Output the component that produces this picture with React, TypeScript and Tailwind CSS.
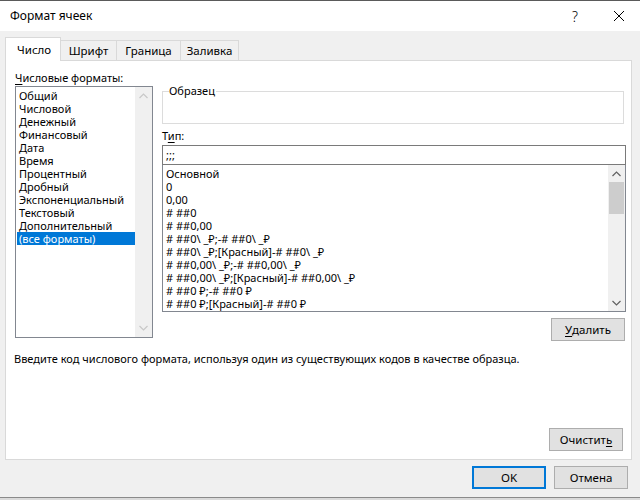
import React from "react";

const font = { fontFamily: '"Noto Sans", "Open Sans", sans-serif' };

const leftItems = [
  "Общий",
  "Числовой",
  "Денежный",
  "Финансовый",
  "Дата",
  "Время",
  "Процентный",
  "Дробный",
  "Экспоненциальный",
  "Текстовый",
  "Дополнительный",
  "(все форматы)",
];

const rightItems = [
  "Основной",
  "0",
  "0,00",
  "# ##0",
  "# ##0,00",
  "# ##0\\ _₽;-# ##0\\ _₽",
  "# ##0\\ _₽;[Красный]-# ##0\\ _₽",
  "# ##0,00\\ _₽;-# ##0,00\\ _₽",
  "# ##0,00\\ _₽;[Красный]-# ##0,00\\ _₽",
  "# ##0 ₽;-# ##0 ₽",
  "# ##0 ₽;[Красный]-# ##0 ₽",
];

function Chevron({ up, color }: { up?: boolean; color: string }) {
  return (
    <svg width="9" height="6" viewBox="0 0 9 6">
      <path
        d={up ? "M0.5 5 L4.5 1 L8.5 5" : "M0.5 1 L4.5 5 L8.5 1"}
        fill="none"
        stroke={color}
        strokeWidth="1.2"
      />
    </svg>
  );
}

function Btn({ children, primary }: { children: React.ReactNode; primary?: boolean }) {
  return (
    <div
      className={
        "w-[74px] h-[23px] flex items-center justify-center bg-[#e1e1e1] text-[11.5px] leading-[15px] text-black " +
        (primary ? "border-2 border-[#0078d7]" : "border border-[#adadad]")
      }
    >
      {children}
    </div>
  );
}

export default function App() {
  return (
    <div className="w-[640px] h-[500px] bg-[#f0f0f0] flex flex-col overflow-hidden text-black" style={font}>
      {/* title bar */}
      <div className="h-[31px] bg-white border-t border-[#5a5a5a] flex items-center pl-[10px] shrink-0">
        <div className="text-[12px] flex-1">Формат ячеек</div>
        <div className="w-[40px] text-center text-[14px] mr-[9px] font-light">?</div>
        <div className="w-[30px] flex justify-center mr-[6px]">
          <svg width="12" height="12" viewBox="0 0 12 12">
            <path d="M1 1 L11 11 M11 1 L1 11" stroke="#000" strokeWidth="1" />
          </svg>
        </div>
      </div>

      {/* tabs */}
      <div className="flex items-end pl-[5px] pt-[6px] shrink-0 text-[11.5px]">
        <div className="w-[56px] h-[24px] bg-white border border-[#d9d9d9] border-b-0 -mb-px relative z-10 flex items-center pl-[11px]">
          Число
        </div>
        <div className="w-[56px] h-[20px] border border-[#d9d9d9] border-l-0 border-b-0 flex items-center justify-center">
          Шрифт
        </div>
        <div className="w-[64px] h-[20px] border border-[#d9d9d9] border-l-0 border-b-0 flex items-center justify-center">
          Граница
        </div>
        <div className="w-[58px] h-[20px] border border-[#d9d9d9] border-l-0 border-b-0 flex items-center justify-center">
          Заливка
        </div>
      </div>

      {/* panel */}
      <div className="ml-[5px] w-[627px] h-[400px] bg-white border border-[#d9d9d9] flex flex-col shrink-0 text-[11px]">
        <div className="flex pt-[9px] pl-[9px]">
          {/* left column */}
          <div className="w-[138px] flex flex-col">
            <div className="h-[15px] leading-[15px]">
              <span className="underline underline-offset-2">Ч</span>исловые форматы:
            </div>
            <div className="h-[252px] mt-px border border-[#828790] flex">
              <div className="flex-1 pt-[2px] pl-px">
                {leftItems.map((t) => (
                  <div
                    key={t}
                    className={
                      "h-[13px] leading-[13px] pl-[2px] " +
                      (t === "(все форматы)" ? "bg-[#0078d7] text-white" : "")
                    }
                  >
                    {t}
                  </div>
                ))}
              </div>
              <div className="w-[17px] bg-[#f0f0f0] flex flex-col justify-between items-center py-[6px]">
                <Chevron up color="#c8c8c8" />
                <Chevron color="#c8c8c8" />
              </div>
            </div>
          </div>

          {/* right column */}
          <div className="ml-[9px] w-[464px] flex flex-col">
            <div className="mt-[13px] h-[41px] relative">
              <div className="absolute left-0 right-[2px] top-[8px] bottom-0 border border-[#dcdcdc]" />
              <div className="absolute left-[7px] top-0 bg-white pr-[1px] leading-[15px]">Образец</div>
            </div>
            <div className="mt-[4px] h-[15px] leading-[15px]">
              Т<span className="underline underline-offset-2">и</span>п:
            </div>
            <div className="mt-[2px] h-[20px] border border-[#7a7a7a] pl-[3px] leading-[18px]">;;;</div>
            <div className="h-[147px] border border-[#828790] border-t-0 flex">
              <div className="flex-1 pt-[2px] pl-[3px]">
                {rightItems.map((t) => (
                  <div key={t} className="h-[13px] leading-[13px] whitespace-pre">
                    {t}
                  </div>
                ))}
              </div>
              <div className="w-[17px] bg-[#f0f0f0] flex flex-col items-center">
                <div className="h-[17px] flex items-center">
                  <Chevron up color="#606060" />
                </div>
                <div className="w-[15px] h-[32px] bg-[#cdcdcd]" />
                <div className="flex-1" />
                <div className="h-[17px] flex items-center">
                  <Chevron color="#606060" />
                </div>
              </div>
            </div>
            <div className="mt-[6px] flex justify-end pr-px">
              <Btn>
                <span className="underline underline-offset-2">У</span>далить
              </Btn>
            </div>
          </div>
        </div>
        <div className="mt-[10px] pl-[8px] leading-[15px]">
          Введите код числового формата, используя один из существующих кодов в качестве образца.
        </div>
        <div className="flex-1" />
        <div className="flex justify-end pr-[8px] pb-[8px]">
          <Btn>
            Очисти<span>т</span>
            <span className="underline underline-offset-2">ь</span>
          </Btn>
        </div>
      </div>

      {/* bottom buttons */}
      <div className="flex justify-end gap-[8px] pr-[12px] mt-[6px]">
        <Btn primary>OK</Btn>
        <Btn>Отмена</Btn>
      </div>
      <div className="flex-1" />
      <div className="h-[3px] border-t border-[#8a8a8a] bg-[#dadada]" />
    </div>
  );
}
